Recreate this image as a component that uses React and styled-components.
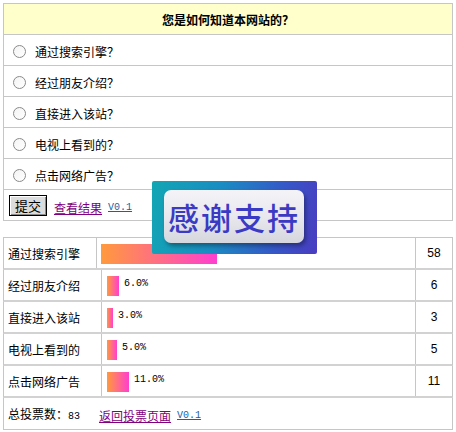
import styled, { createGlobalStyle } from "styled-components";

const options = ["通过搜索引擎？", "经过朋友介绍？", "直接进入该站？", "电视上看到的？", "点击网络广告？"];

const results = [
    { name: "通过搜索引擎", count: 58, percent: "58.0%", labelW: 93 },
    { name: "经过朋友介绍", count: 6, percent: "6.0%", labelW: 98 },
    { name: "直接进入该站", count: 3, percent: "3.0%", labelW: 98 },
    { name: "电视上看到的", count: 5, percent: "5.0%", labelW: 98 },
    { name: "点击网络广告", count: 11, percent: "11.0%", labelW: 98 },
];

export default function App() {
    return (
        <>
            <GlobalStyle />
            <Page>
                <VoteTable>
                    <Header>您是如何知道本网站的？</Header>
                    {options.map(item =>
                        <OptionRow key={item}>
                            <Radio type="radio" name="vote" />
                            <span>{item}</span>
                        </OptionRow>
                    )}
                    <ActionRow>
                        <SubmitButton>提交</SubmitButton>
                        <VisitedLink href="#">查看结果</VisitedLink>
                        <Version href="#">V0.1</Version>
                    </ActionRow>
                </VoteTable>

                <ResultTable>
                    {results.map((item, i) =>
                        <ResultRow key={item.name} $labelW={item.labelW} $first={i === 0}>
                            <Label>{item.name}</Label>
                            <BarCell $pad={i === 0 ? 4 : 5}>
                                <Bar style={{ width: item.count * 2 }} />
                                <Percent>{item.percent}</Percent>
                            </BarCell>
                            <Count>{item.count}</Count>
                        </ResultRow>
                    )}
                    <TotalRow>
                        <span>总投票数：<Mono>83</Mono></span>
                        <VisitedLink href="#">返回投票页面</VisitedLink>
                        <Version href="#">V0.1</Version>
                    </TotalRow>
                </ResultTable>

                <ThanksAd>
                    <ThanksInner>感谢支持</ThanksInner>
                </ThanksAd>
            </Page>
        </>
    )
}

const GlobalStyle = createGlobalStyle`
body{
    margin:0;
    background:#fff;
    font-family: 'Noto Sans CJK SC', 'Noto Sans', sans-serif;
    font-size:12px;
    color:#000;
}
`
const Page = styled.div`
position:relative;
width:450px;
padding:3px 0 0 3px;
`
const VoteTable = styled.div`
border:1px solid #c6c6c6;
`
const Header = styled.div`
height:30px;
display:flex;
align-items:center;
justify-content:center;
background:#ffffcc;
border-bottom:1px solid #c6c6c6;
font-weight:bold;
font-size:12px;
`
const OptionRow = styled.div`
height:31px;
display:flex;
align-items:center;
gap:9px;
padding:3px 0 0 9px;
box-sizing:border-box;
border-bottom:1px solid #c6c6c6;
font-size:12px;
`
const Radio = styled.input`
appearance:none;
margin:0;
width:13px;
height:13px;
border-radius:50%;
border:1px solid #8a8a8a;
background:linear-gradient(135deg, #f4f4f4, #ffffff);
box-sizing:border-box;
`
const ActionRow = styled.div`
height:30px;
display:flex;
align-items:center;
gap:6px;
padding-left:5px;
`
const SubmitButton = styled.button`
width:38px;
height:21px;
padding:0;
margin-right:1px;
font-family: 'Noto Sans CJK SC', sans-serif;
font-size:13px;
line-height:17px;
color:#000;
background:#dcdcdc;
border:1px solid #000;
box-shadow: inset 1px 1px 0 #ffffff, inset -1px -1px 0 #8a8a8a;
`
const VisitedLink = styled.a`
color:#800080;
text-decoration:underline;
font-size:12px;
margin-top:4px;
`
const Version = styled.a`
color:#1a5fa8;
text-decoration:underline;
font-family: 'Liberation Mono', monospace;
font-size:10px;
margin-top:4px;
`
const ResultTable = styled.div`
margin-top:16px;
`
const ResultRow = styled.div`
display:grid;
grid-template-columns: ${p => p.$labelW}px 1fr 37px;
height:30px;
border:1px solid #c6c6c6;
border-top:${p => p.$first ? "1px solid #c6c6c6" : "none"};
border-bottom:2px solid #d2d2d2;
`
const Label = styled.div`
display:flex;
align-items:center;
padding-left:4px;
border-right:1px solid #c6c6c6;
font-size:12px;
`
const BarCell = styled.div`
display:flex;
align-items:flex-start;
gap:5px;
padding:6px 0 0 ${p => p.$pad}px;
`
const Bar = styled.div`
height:20px;
background:linear-gradient(90deg, #ff9a3c, #ff3fd0);
`
const Percent = styled.span`
font-family: 'Liberation Mono', monospace;
font-size:10px;
line-height:10px;
margin-top:3px;
`
const Count = styled.div`
display:flex;
align-items:center;
justify-content:center;
border-left:1px solid #c6c6c6;
font-family: 'Liberation Sans', Arial, sans-serif;
font-size:12px;
`
const TotalRow = styled.div`
height:31px;
display:flex;
align-items:center;
gap:0;
padding-left:4px;
border:1px solid #c6c6c6;
border-top:none;
font-size:12px;
& > span{ width:91px; }
& > a:nth-of-type(2){ margin-left:6px; }
`
const Mono = styled.span`
font-family: 'Liberation Mono', monospace;
font-size:10px;
`
const ThanksAd = styled.div`
position:absolute;
left:152px;
top:181px;
width:165px;
height:73px;
box-sizing:border-box;
padding:9px 13px 11px 12px;
border-radius:2px;
background:linear-gradient(100deg, #12a6b4 0%, #1a8cc2 40%, #3558c8 75%, #4a3cc0 100%);
`
const ThanksInner = styled.div`
height:100%;
display:flex;
align-items:center;
justify-content:center;
border-radius:7px;
background:linear-gradient(180deg, #f4f4f8 0%, #e6e6ec 55%, #d6d6de 100%);
box-shadow: 2px 3px 4px rgba(0,0,0,0.35);
color:#3a3ac4;
font-family: 'Noto Sans CJK SC', sans-serif;
font-size:31px;
font-weight:500;
letter-spacing:2px;
`
